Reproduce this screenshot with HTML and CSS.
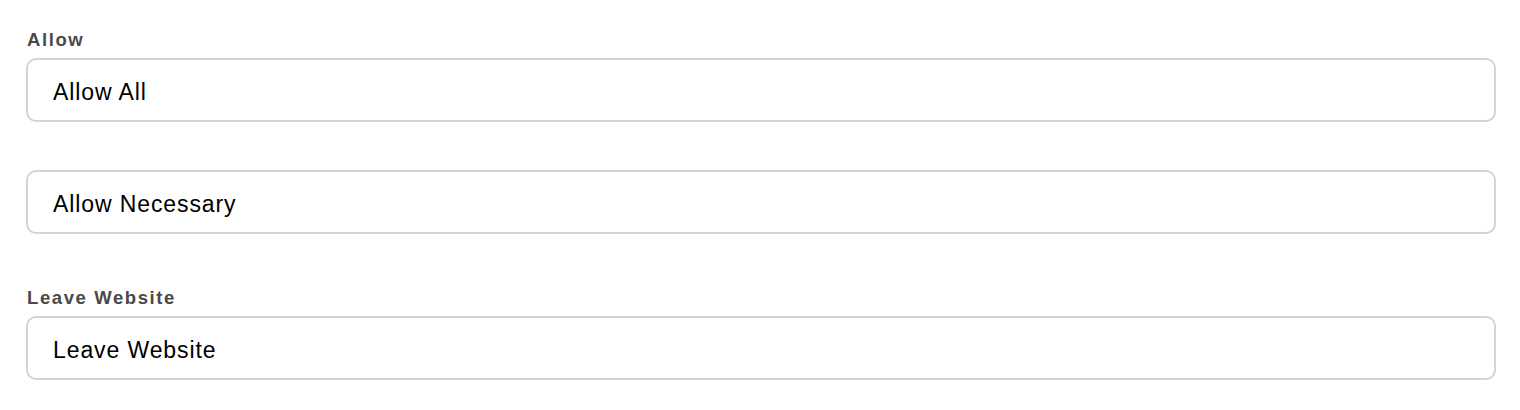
FILE: index.html
```html
<!DOCTYPE html>
<html lang="en">
<head>
<meta charset="utf-8">
<title>Consent buttons</title>
<link rel="stylesheet" href="styles.css">
</head>
<body>
<form class="settings">
  <div class="group">
    <label class="label" for="allow-all">Allow</label>
    <input class="field" id="allow-all" type="text" value="Allow All">
  </div>
  <div class="group">
    <input class="field" id="allow-necessary" type="text" value="Allow Necessary">
  </div>
  <div class="group group-spaced">
    <label class="label" for="leave">Leave Website</label>
    <input class="field" id="leave" type="text" value="Leave Website">
  </div>
</form>
</body>
</html>
```

FILE: styles.css
```css
html, body {
  margin: 0;
  padding: 0;
  background: #ffffff;
}

body {
  font-family: "Liberation Sans", Arial, Helvetica, sans-serif;
  color: #000;
}

.settings {
  display: flex;
  flex-direction: column;
  gap: 48px;
  padding: 27px 24px 0 26px;
}

.group {
  display: flex;
  flex-direction: column;
}

.group-spaced {
  margin-top: 3px;
}

.label {
  font-size: 18.5px;
  line-height: 22px;
  font-weight: 700;
  letter-spacing: 1.6px;
  color: #4a4a4a;
  padding: 2px 0 0 1px;
  margin-bottom: 7px;
}

.field {
  box-sizing: border-box;
  width: 100%;
  height: 64px;
  margin: 0;
  padding: 4px 24px 0 25px;
  border: 2px solid #d4d4d4;
  border-radius: 10px;
  background: #fff;
  font-family: inherit;
  font-size: 23px;
  letter-spacing: 0.9px;
  color: #000;
  outline: none;
}
```
